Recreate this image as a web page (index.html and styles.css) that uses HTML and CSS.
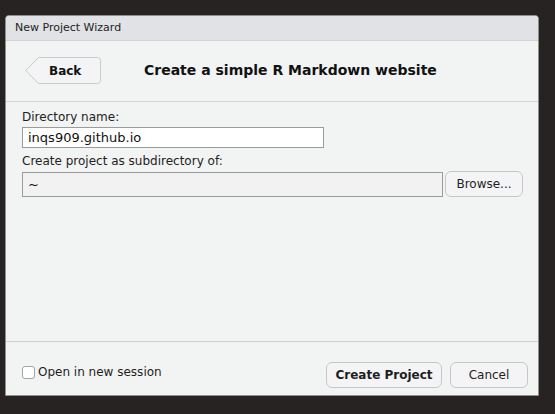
FILE: index.html
```html
<!DOCTYPE html>
<html>
<head>
<meta charset="utf-8">
<link rel="stylesheet" href="styles.css">
</head>
<body>
<div class="window">
  <div class="titlebar">New Project Wizard</div>
  <div class="header">
    <button class="back">
      <svg class="back-shape" width="77" height="28" viewBox="0 0 77 28">
        <path d="M13.5 0.5 H72.5 Q75.5 0.5 75.5 3.5 V23.5 Q75.5 26.5 72.5 26.5 H13.5 L0.8 13.5 Z" fill="#f4f4f6" stroke="#c9cacc" stroke-width="1"/>
      </svg>
      <span class="back-label">Back</span>
    </button>
    <div class="heading">Create a simple R Markdown website</div>
  </div>
  <div class="content">
    <label class="label">Directory name:</label>
    <div class="input dir">inqs909.github.io</div>
    <label class="label sub">Create project as subdirectory of:</label>
    <div class="row">
      <div class="input parent">~</div>
      <button class="btn browse">Browse...</button>
    </div>
  </div>
  <div class="footer">
    <label class="check"><span class="box"></span>Open in new session</label>
    <div class="actions">
      <button class="btn create">Create Project</button>
      <button class="btn cancel">Cancel</button>
    </div>
  </div>
</div>
</body>
</html>
```
FILE: styles.css
```css
html, body {
  margin: 0;
  padding: 0;
}
body {
  background: #272322;
  width: 555px;
  height: 414px;
  overflow: hidden;
  font-family: "DejaVu Sans", sans-serif;
  color: #1e1e1e;
}
.window {
  margin: 15px 0 0 5px;
  width: 534px;
  height: 381px;
  box-sizing: border-box;
  border: 1px solid #8e8e8e;
  border-radius: 4px 4px 0 0;
  background: #f2f3f3;
  display: flex;
  flex-direction: column;
  overflow: hidden;
}
.titlebar {
  height: 25px;
  box-sizing: border-box;
  background: #e1e2e5;
  border-bottom: 1px solid #d2d3d5;
  font-size: 11px;
  line-height: 24px;
  padding-left: 9px;
  color: #222;
}
.header {
  height: 61px;
  box-sizing: border-box;
  border-bottom: 1px solid #d3d3d3;
  display: flex;
  align-items: center;
  padding-left: 19px;
}
.back {
  position: relative;
  width: 77px;
  height: 28px;
  padding: 0;
  border: none;
  background: none;
  margin-top: -1px;
  font-family: inherit;
}
.back-shape {
  position: absolute;
  left: 0;
  top: 0;
}
.back-label {
  position: relative;
  display: block;
  padding-left: 24px;
  text-align: left;
  font-weight: bold;
  font-size: 12px;
  line-height: 26px;
  color: #111;
}
.heading {
  margin-left: 42px;
  font-weight: bold;
  font-size: 14px;
  color: #111;
  margin-top: -2px;
}
.content {
  flex: 1;
  padding: 7px 16px 0 16px;
  display: flex;
  flex-direction: column;
  align-items: flex-start;
}
.label {
  font-size: 12px;
  line-height: 17px;
  color: #222;
}
.label.sub {
  margin-top: 5px;
}
.input {
  box-sizing: border-box;
  border: 1px solid #9b9b9b;
  font-size: 13px;
  padding-left: 5px;
  color: #111;
}
.dir {
  width: 302px;
  height: 21px;
  line-height: 19px;
  background: #ffffff;
  margin-top: 1px;
}
.row {
  display: flex;
  align-items: center;
  gap: 2px;
  margin-top: 1px;
}
.parent {
  width: 421px;
  height: 25px;
  line-height: 23px;
  background: #f2f2f2;
}
.btn {
  box-sizing: border-box;
  border: 1px solid #c6c7c9;
  border-radius: 6px;
  background: #f4f4f6;
  font-family: inherit;
  font-size: 12px;
  color: #1e1e1e;
  height: 26px;
  padding: 0;
}
.browse {
  width: 78px;
}
.footer {
  height: 54px;
  box-sizing: border-box;
  border-top: 1px solid #cfcfcf;
  display: flex;
  align-items: center;
  justify-content: space-between;
  padding: 12px 10px 0 16px;
}
.check {
  display: flex;
  align-items: center;
  font-size: 12px;
  color: #1e1e1e;
  margin-top: -5px;
}
.box {
  width: 13px;
  height: 13px;
  box-sizing: border-box;
  border: 1px solid #a4a4a4;
  border-radius: 3px;
  background: #fff;
  margin-right: 3px;
}
.actions {
  display: flex;
  gap: 8px;
}
.create {
  width: 116px;
  font-weight: bold;
}
.cancel {
  width: 78px;
}
```
